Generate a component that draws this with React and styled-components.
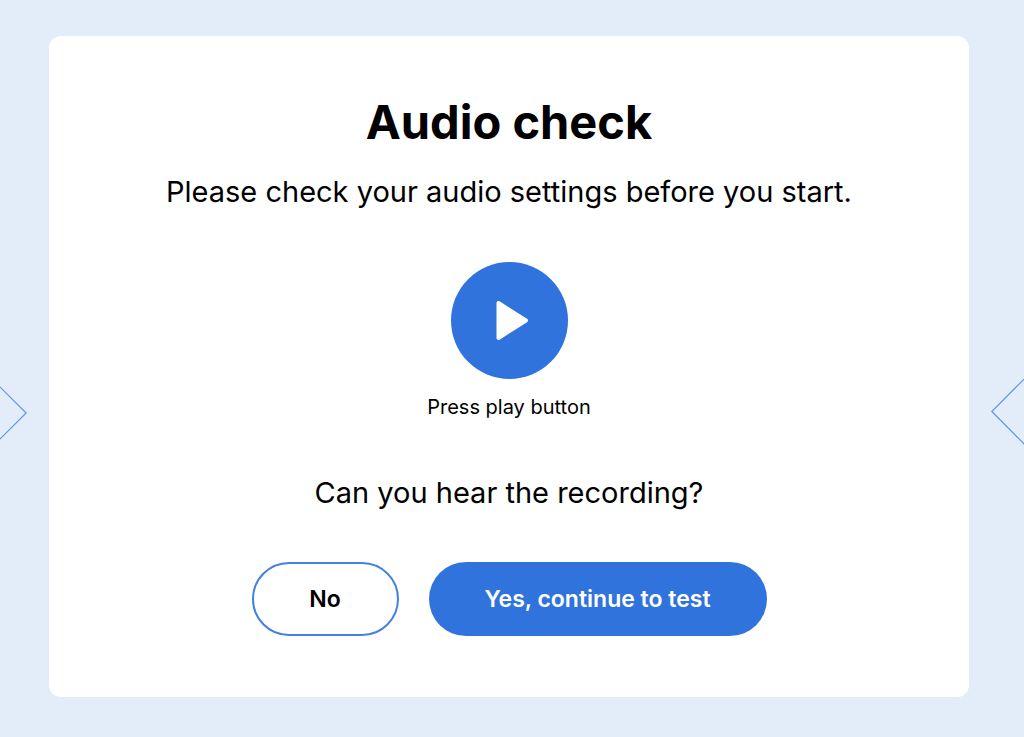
import React from "react";
import styled, { createGlobalStyle } from "styled-components";

const App = () => {
  return (
    <Page>
      <GlobalStyle />
      <LeftDiamond width="27" height="54" viewBox="0 0 27 54" aria-hidden="true">
        <path d="M-1 0 L26.2 27 L-1 54" />
      </LeftDiamond>
      <RightDiamond width="33" height="66" viewBox="0 0 33 66" aria-hidden="true">
        <path d="M34 -0.8 L0.8 32.5 L34 65.8" />
      </RightDiamond>
      <Card>
        <Title>Audio check</Title>
        <Message>Please check your audio settings before you start.</Message>
        <PlayButton type="button" aria-labelledby="play-hint">
          <svg width="34" height="42" viewBox="0 0 34 42" aria-hidden="true">
            <path
              d="M3.5 3 L31 20.5 L3.5 38 Z"
              fill="#fff"
              stroke="#fff"
              strokeWidth="4"
              strokeLinejoin="round"
            />
          </svg>
        </PlayButton>
        <Hint id="play-hint">Press play button</Hint>
        <Message>Can you hear the recording?</Message>
        <Actions>
          <OutlineButton type="button">No</OutlineButton>
          <PrimaryButton type="button">Yes, continue to test</PrimaryButton>
        </Actions>
      </Card>
    </Page>
  );
};

export default App;

const GlobalStyle = createGlobalStyle`
  * {
    box-sizing: border-box;
  }

  body {
    margin: 0;
    background-color: #e3edfa;
    color: #000;
    font-family: Inter, "Liberation Sans", sans-serif;
  }

  button {
    font-family: inherit;
    cursor: pointer;
  }
`;

const Page = styled.main`
  position: relative;
  min-height: 100vh;
  padding: 36px 55px 40px 49px;
  overflow: hidden;
`;

const Diamond = styled.svg`
  position: absolute;
  fill: none;
  stroke: #5b93ec;
  stroke-width: 1.2;
`;

const LeftDiamond = styled(Diamond)`
  top: 386px;
  left: 0;
`;

const RightDiamond = styled(Diamond)`
  top: 379px;
  right: 0;
`;

const Card = styled.section`
  display: flex;
  flex-direction: column;
  align-items: center;
  padding: 56px 32px 61px;
  border-radius: 12px;
  background-color: #fff;
  text-align: center;
`;

const Title = styled.h1`
  margin: 0 0 20px;
  font-size: 47px;
  line-height: 60px;
  font-weight: 700;
`;

const Message = styled.p`
  margin: 0;
  font-size: 29px;
  line-height: 40px;
`;

const PlayButton = styled.button`
  display: flex;
  align-items: center;
  justify-content: center;
  width: 117px;
  height: 117px;
  margin: 50px 0 12px;
  padding: 0 0 0 6px;
  border: none;
  border-radius: 50%;
  background-color: #3173dc;
`;

const Hint = styled.p`
  margin: 0 0 50px;
  font-size: 20px;
  line-height: 32px;
`;

const Actions = styled.div`
  display: flex;
  flex-wrap: wrap;
  justify-content: center;
  gap: 30px;
  margin-top: 49px;
`;

const Button = styled.button`
  height: 74px;
  border-radius: 37px;
  font-size: 23px;
  line-height: 32px;
  font-weight: 600;
`;

const OutlineButton = styled(Button)`
  min-width: 147px;
  border: 2px solid #4580e3;
  background-color: #fff;
  color: #000;
`;

const PrimaryButton = styled(Button)`
  min-width: 338px;
  border: none;
  background-color: #3173dc;
  color: #fff;
`;
